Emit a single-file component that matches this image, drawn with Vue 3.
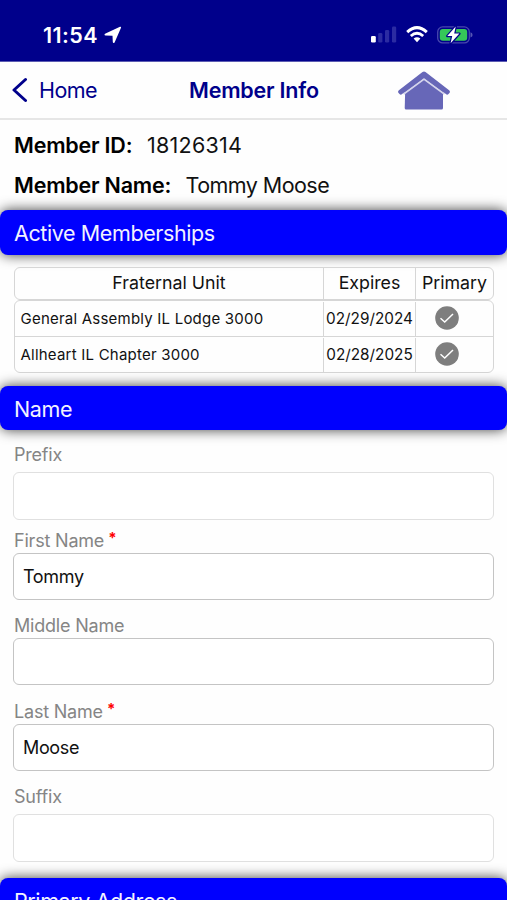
<template>
    <div class="screen">
        <div class="status-bar">
            <span class="time">11:54</span>
            <svg class="location" width="18" height="18" viewBox="0 0 18 18">
                <path d="M1 7.8 L16 .8 Q17.4.4 17 1.8 L10.6 16.4 Q9.2 17.8 8.8 16 L8.5 9.8 L1.5 9.5 Q-.2 9 1 7.8Z" fill="#fff" />
            </svg>
            <svg class="signal" width="26" height="17" viewBox="0 0 26 17">
                <rect x="0" y="10" width="4.8" height="6.5" rx="1.3" fill="#fff" />
                <rect x="7.2" y="7" width="4.2" height="9.5" rx="1.3" fill="#2b2ba2" />
                <rect x="14" y="4" width="4.2" height="12.5" rx="1.3" fill="#2b2ba2" />
                <rect x="21" y="0.5" width="4.2" height="16" rx="1.3" fill="#2b2ba2" />
            </svg>
            <svg class="wifi" width="22" height="17" viewBox="0 0 22 17">
                <path d="M1.2 6.1 Q11-2.8 20.8 6.1" fill="none" stroke="#fff" stroke-width="3" />
                <path d="M4.8 10 Q11 4.4 17.2 10" fill="none" stroke="#fff" stroke-width="2.8" />
                <path d="M7.6 12.6 Q11 9.8 14.4 12.6 L11 16.2Z" fill="#fff" />
            </svg>
            <svg class="battery" width="36" height="18" viewBox="0 0 36 18">
                <rect x=".7" y=".9" width="31.6" height="16" rx="5" fill="none" stroke="#4747ad" stroke-width="1.3" />
                <rect x="2.8" y="3" width="27.4" height="11.8" rx="3" fill="#35c759" />
                <path d="M33.5 6.2 Q35.6 7 35.6 8.9 T33.5 11.6Z" fill="#5656b4" />
                <path d="M18.7.5 L10.3 10 H15.2 L13.6 17.3 L22.4 7.6 H17.2Z" fill="#fff" stroke="#00008b" stroke-width="2.4" paint-order="stroke" stroke-linejoin="round" />
            </svg>
        </div>

        <div class="nav-bar">
            <svg class="chevron" width="16" height="26" viewBox="0 0 16 26">
                <path d="M13.5 2.5 L2 13 L13.5 23.5" fill="none" stroke="#00008b" stroke-width="3" stroke-linecap="round" stroke-linejoin="round" />
            </svg>
            <span class="back">Home</span>
            <span class="title">Member Info</span>
            <svg class="house" width="54" height="40" viewBox="0 0 54 40">
                <path d="M8.2 20 L27 6.3 L46 20 V37 Q46 38.5 44.5 38.5 H9.2 Q7.7 38.5 7.7 37Z" fill="#6767b8" />
                <path d="M6.6 23 L27 8 L47.4 23" fill="none" stroke="#d5d5ec" stroke-width="2" />
                <path d="M1.9 19.3 L25.5 1.1 Q27-.1 28.5 1.1 L52.1 19.3 Q53.6 20.5 52.4 22.1 L51.5 23.1 Q50.2 24.2 48.9 23.1 L27 6.9 L5.1 23.1 Q3.8 24.2 2.5 23.1 L1.6 22.1 Q.4 20.5 1.9 19.3Z" fill="#6767b8" />
            </svg>
        </div>

        <div class="member">
            <div class="member-row">
                <span class="member-label id-label">Member ID:</span>
                <span class="id-value">18126314</span>
            </div>
            <div class="member-row">
                <span class="member-label name-label">Member Name:</span>
                <span class="name-value">Tommy Moose</span>
            </div>
        </div>

        <h2 class="section-title">Active Memberships</h2>

        <div class="memberships">
            <div class="unit-row unit-head">
                <span>Fraternal Unit</span>
                <span>Expires</span>
                <span>Primary</span>
            </div>
            <div class="unit-list">
                <div v-for="unit in units" :key="unit.name" class="unit-row">
                    <span class="unit-name">{{ unit.name }}</span>
                    <span class="unit-date">{{ unit.expires }}</span>
                    <span class="unit-primary">
                        <svg width="24" height="24" viewBox="0 0 24 24">
                            <circle cx="12" cy="12" r="11.8" fill="#7e7e7e" />
                            <path d="M5.5 12.3 L9.7 16 L18 8" fill="none" stroke="#fff" stroke-width="1.5" />
                        </svg>
                    </span>
                </div>
            </div>
        </div>

        <h2 class="section-title">Name</h2>

        <div class="fields">
            <div v-for="field in fields" :key="field.label" class="field">
                <label :for="field.id">{{ field.label }}<span v-if="field.required" class="required">*</span></label>
                <input :id="field.id" v-model="field.value" :class="{ picker: field.picker }" :readonly="field.picker" type="text" />
            </div>
        </div>

        <h2 class="section-title">Primary Address</h2>
    </div>
</template>

<script setup>
import { ref } from "vue";

const units = [
    { name: "General Assembly IL Lodge 3000", expires: "02/29/2024" },
    { name: "Allheart IL Chapter 3000", expires: "02/28/2025" }
];

const fields = ref([
    { id: "prefix", label: "Prefix", value: "", picker: true },
    { id: "first", label: "First Name", value: "Tommy", required: true },
    { id: "middle", label: "Middle Name", value: "" },
    { id: "last", label: "Last Name", value: "Moose", required: true },
    { id: "suffix", label: "Suffix", value: "", picker: true }
]);
</script>

<style>
body {
    margin: 0;
    background: #fff;
}
</style>

<style scoped>
.screen {
    height: 900px;
    overflow: hidden;
    background: #fefefe;
    color: #111;
    font-family: Inter, "Liberation Sans", sans-serif;
}

.status-bar {
    display: flex;
    align-items: center;
    box-sizing: border-box;
    height: 62px;
    padding: 8px 34px 0 43px;
    background: #00008b;
    border-bottom: 1px solid #5c5cb2;
}

.time {
    color: #fff;
    font-size: 21.5px;
    font-weight: 600;
    letter-spacing: 0.4px;
}

.location {
    margin-left: 6px;
}

.signal {
    margin-left: auto;
}

.wifi {
    margin-left: 9px;
}

.battery {
    margin-left: 9px;
}

.nav-bar {
    display: flex;
    align-items: center;
    box-sizing: border-box;
    height: 58px;
    padding: 0 56px 0 12px;
    border-bottom: 2px solid #e6e6e6;
    color: #00008b;
    font-size: 21.5px;
}

.back {
    width: 150px;
    margin-left: 11px;
    letter-spacing: -0.55px;
}

.title {
    font-weight: 600;
    letter-spacing: -0.2px;
}

.house {
    margin-top: 1px;
    margin-left: auto;
}

.member {
    height: 85px;
    padding: 5px 14px 0;
    font-size: 21.5px;
}

.member-row {
    display: flex;
    height: 40px;
    align-items: center;
}

.member-label {
    color: #000;
    font-weight: 600;
    letter-spacing: -0.2px;
}

.id-label {
    width: 133px;
}

.name-label {
    width: 171.5px;
}

.id-value {
    letter-spacing: 0.25px;
}

.name-value {
    letter-spacing: -0.55px;
}

.section-title {
    height: 44.5px;
    margin: 0;
    padding-left: 14px;
    border-radius: 8px;
    background: #0000fe;
    box-shadow: 0 0 13px rgba(0, 0, 0, 0.75);
    color: #f2f2ff;
    font-size: 21.5px;
    font-weight: 400;
    line-height: 46px;
    letter-spacing: -0.4px;
}

.memberships {
    height: 118.5px;
    padding: 12.5px 13px 0 14px;
}

.unit-row {
    display: grid;
    grid-template-columns: 308px 92px 1fr;
    align-items: center;
    box-sizing: border-box;
    height: 35px;
}

.unit-row + .unit-row {
    height: 36px;
    border-top: 1px solid #d6d6d6;
}

.unit-row > span + span {
    border-left: 1px solid #d6d6d6;
}

.unit-head,
.unit-list {
    border: 1px solid #d6d6d6;
    border-radius: 6px;
}

.unit-head {
    height: 33px;
    font-size: 17.8px;
    text-align: center;
}

.unit-head > span {
    height: 31px;
    line-height: 30px;
}

.unit-name {
    padding-left: 5.5px;
    font-size: 15px;
    letter-spacing: 0.22px;
    line-height: 34px;
}

.unit-date {
    height: 34px;
    font-size: 15.3px;
    line-height: 33px;
    text-align: center;
}

.unit-name {
    height: 34px;
    line-height: 33px;
}

.unit-primary {
    display: flex;
    align-items: center;
    box-sizing: border-box;
    height: 34px;
    padding: 0 0 2px 19px;
}

.fields {
    height: 436px;
    padding: 12px 13px 0;
}

.field {
    height: 85.6px;
}

label {
    display: block;
    height: 25.2px;
    padding-left: 1px;
    color: #858585;
    font-size: 18px;
    line-height: 26.4px;
    letter-spacing: -0.2px;
}

.required {
    position: relative;
    top: -4px;
    margin-left: 4px;
    color: #f00;
    font-size: 15px;
    font-weight: 700;
}

input {
    display: block;
    box-sizing: border-box;
    width: 100%;
    height: 47px;
    padding: 0 9px;
    border: 1.5px solid #c4c4c4;
    border-radius: 6px;
    outline: none;
    background: #fff;
    color: #111;
    font-family: inherit;
    font-size: 18px;
    letter-spacing: -0.35px;
}

.picker {
    height: 48px;
    margin-top: 4.8px;
    border-color: #e0e0e0;
}
</style>
